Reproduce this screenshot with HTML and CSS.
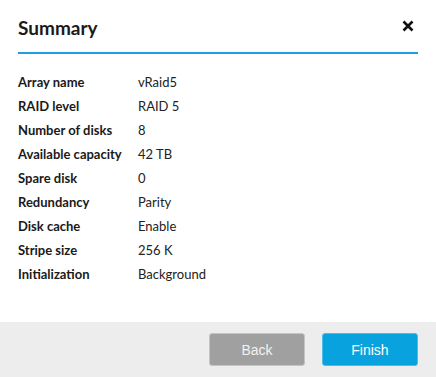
FILE: index.html
```html
<!DOCTYPE html>
<html>
<head>
<meta charset="utf-8">
<link rel="stylesheet" href="styles.css">
</head>
<body>
<div class="dialog">
  <div class="content">
    <div class="header">
      <h1 class="title">Summary</h1>
      <button class="close" aria-label="Close">
        <svg width="12" height="12" viewBox="0 0 12 12"><path d="M1.5 1.5 L10.5 10.5 M10.5 1.5 L1.5 10.5" stroke="#111" stroke-width="2.6" stroke-linecap="butt"/></svg>
      </button>
    </div>
    <dl class="summary">
      <div class="row"><dt>Array name</dt><dd>vRaid5</dd></div>
      <div class="row"><dt>RAID level</dt><dd>RAID 5</dd></div>
      <div class="row"><dt>Number of disks</dt><dd>8</dd></div>
      <div class="row"><dt>Available capacity</dt><dd>42 TB</dd></div>
      <div class="row"><dt>Spare disk</dt><dd>0</dd></div>
      <div class="row"><dt>Redundancy</dt><dd>Parity</dd></div>
      <div class="row"><dt>Disk cache</dt><dd>Enable</dd></div>
      <div class="row"><dt>Stripe size</dt><dd>256 K</dd></div>
      <div class="row"><dt>Initialization</dt><dd>Background</dd></div>
    </dl>
  </div>
  <div class="footer">
    <button class="btn btn-back">Back</button>
    <button class="btn btn-finish">Finish</button>
  </div>
</div>
</body>
</html>
```
FILE: styles.css
```css
html, body {
  margin: 0;
  padding: 0;
  background: #fff;
}
.dialog {
  width: 436px;
  height: 377px;
  display: flex;
  flex-direction: column;
  font-family: Lato, "Liberation Sans", sans-serif;
  color: #1a1a1a;
}
.content {
  flex: 1;
  padding: 0 18px;
}
.header {
  height: 52px;
  border-bottom: 2px solid #1e9fe2;
  display: flex;
  align-items: center;
  justify-content: space-between;
}
.title {
  margin: 0;
  padding-top: 2px;
  font-size: 19px;
  font-weight: 700;
  color: #1a1a1a;
}
.close {
  border: 0;
  background: none;
  padding: 0;
  margin-right: 4px;
  margin-top: 0;
  width: 12px;
  height: 12px;
  display: flex;
  align-items: center;
  justify-content: center;
}
.summary {
  margin: 16px 0 0;
}
.row {
  display: flex;
  height: 24px;
  align-items: center;
  font-size: 13px;
}
.row dt {
  width: 120px;
  font-weight: 700;
  color: #1a1a1a;
}
.row dd {
  margin: 0;
  color: #222;
}
.footer {
  height: 55px;
  background: #ededed;
  display: flex;
  justify-content: flex-end;
  align-items: flex-start;
  gap: 17px;
  padding: 11px 18px 0 0;
  box-sizing: border-box;
}
.btn {
  width: 96px;
  height: 33px;
  border-radius: 3px;
  font-family: "Liberation Sans", Arial, sans-serif;
  font-size: 14px;
  color: #fff;
  padding: 0;
}
.btn-back {
  background: #a0a0a0;
  border: 1px solid #c4c4c4;
  color: #f2f2f2;
}
.btn-finish {
  background: #08a2de;
  border: 1px solid #4cbcea;
}
```
